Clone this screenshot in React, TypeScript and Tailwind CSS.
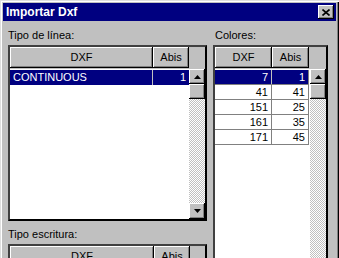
import React from "react";

const raised =
  "bg-[#c0c0c0] shadow-[inset_-1px_-1px_#000,inset_1px_1px_#fff,inset_-2px_-2px_#808080]";

function Arrow({ down }: { down?: boolean }) {
  return (
    <svg width="7" height="4" viewBox="0 0 7 4">
      <path d={down ? "M0 0h7L3.5 4z" : "M3.5 0L7 4H0z"} fill="#000" />
    </svg>
  );
}

function ScrollBar() {
  return (
    <div className="flex w-[16px] flex-1 flex-col">
      <div className={`flex h-[15px] items-center justify-center ${raised}`}>
        <Arrow />
      </div>
      <div className={`h-[15px] ${raised}`} />
      <div className="flex-1 bg-[repeating-conic-gradient(#c0c0c0_0_25%,#fff_0_50%)] bg-[length:2px_2px]" />
    </div>
  );
}

type Row = [string, string];

function Grid({
  cols,
  rows,
  selected,
  lines,
  height,
  downArrow,
}: {
  cols: [number, number];
  rows: Row[];
  selected: number;
  lines?: boolean;
  height?: string;
  downArrow?: boolean;
}) {
  return (
    <div
      className={`flex flex-col border-2 border-t-[#404040] border-l-[#404040] border-r-black border-b-black bg-white ${height ?? ""}`}
    >
      <div className="flex h-[22px] bg-[#c0c0c0] pb-[1px]">
        <div
          className={`flex items-center justify-center ${raised}`}
          style={{ width: cols[0] }}
        >
          DXF
        </div>
        <div
          className={`flex items-center justify-center ${raised}`}
          style={{ width: cols[1] }}
        >
          Abis
        </div>
        <div className="flex-1" />
      </div>
      <div className="flex min-h-0 flex-1 pt-[1px]">
        <div className="flex flex-col">
          {rows.map((r, i) => {
            const sel = i === selected;
            return (
              <div
                key={i}
                className={`flex h-[15px] leading-[14px] ${
                  sel ? "bg-[#000080] text-white" : "text-black"
                } ${lines ? "border-b border-[#808080]" : ""}`}
              >
                <div
                  className={`border-r ${sel ? "border-[#c0c0c0]" : "border-[#808080]"} ${
                    lines ? "pr-[3px] text-right" : "pl-[3px] text-left"
                  }`}
                  style={{ width: cols[0] }}
                >
                  {r[0]}
                </div>
                <div
                  className={`pr-[3px] text-right ${lines ? "border-r border-[#808080]" : ""}`}
                  style={{ width: cols[1] }}
                >
                  {r[1]}
                </div>
              </div>
            );
          })}
        </div>
        <div className="flex-1" />
        <div className="-mt-[1px] flex flex-col">
          <ScrollBar />
          {downArrow && (
            <div className={`flex h-[16px] w-[16px] items-center justify-center ${raised}`}>
              <Arrow down />
            </div>
          )}
        </div>
      </div>
    </div>
  );
}

export default function App() {
  return (
    <div className="h-[258px] w-[339px] overflow-hidden bg-[#c0c0c0] font-['Liberation_Sans',Arial,sans-serif] text-[11px] text-black shadow-[inset_1px_1px_#dfdfdf,inset_2px_2px_#fff,inset_-1px_0_#000,inset_-2px_0_#808080]">
      <div className="px-[3px] pt-[3px]">
        <div className="flex h-[18px] items-center justify-between bg-[#000080] pl-[3px] pr-[2px]">
          <span className="text-[12px] font-bold text-white">Importar Dxf</span>
          <div className={`flex h-[14px] w-[16px] items-center justify-center ${raised}`}>
            <svg width="8" height="7" viewBox="0 0 8 7">
              <path d="M0.5 0.5l7 6M7.5 0.5l-7 6" stroke="#000" strokeWidth="1.6" />
            </svg>
          </div>
        </div>
      </div>
      <div className="flex gap-[6px] pl-[8px]">
        <div className="flex w-[199px] flex-col">
          <div className="pb-[3px] pt-[8px] leading-[13px]">Tipo de línea:</div>
          <Grid
            cols={[143, 36]}
            rows={[["CONTINUOUS", "1"]]}
            selected={0}
            height="h-[176px]"
            downArrow
          />
          <div className="pb-[3px] pt-[7px] leading-[13px]">Tipo escritura:</div>
          <Grid cols={[144, 36]} rows={[]} selected={-1} height="h-[60px]" />
        </div>
        <div className="flex w-[115px] flex-col">
          <div className="pb-[3px] pt-[8px] leading-[13px] pl-[2px]">Colores:</div>
          <Grid
            cols={[57, 37]}
            rows={[
              ["7", "1"],
              ["41", "41"],
              ["151", "25"],
              ["161", "35"],
              ["171", "45"],
            ]}
            selected={0}
            lines
            height="h-[240px]"
          />
        </div>
      </div>
    </div>
  );
}
